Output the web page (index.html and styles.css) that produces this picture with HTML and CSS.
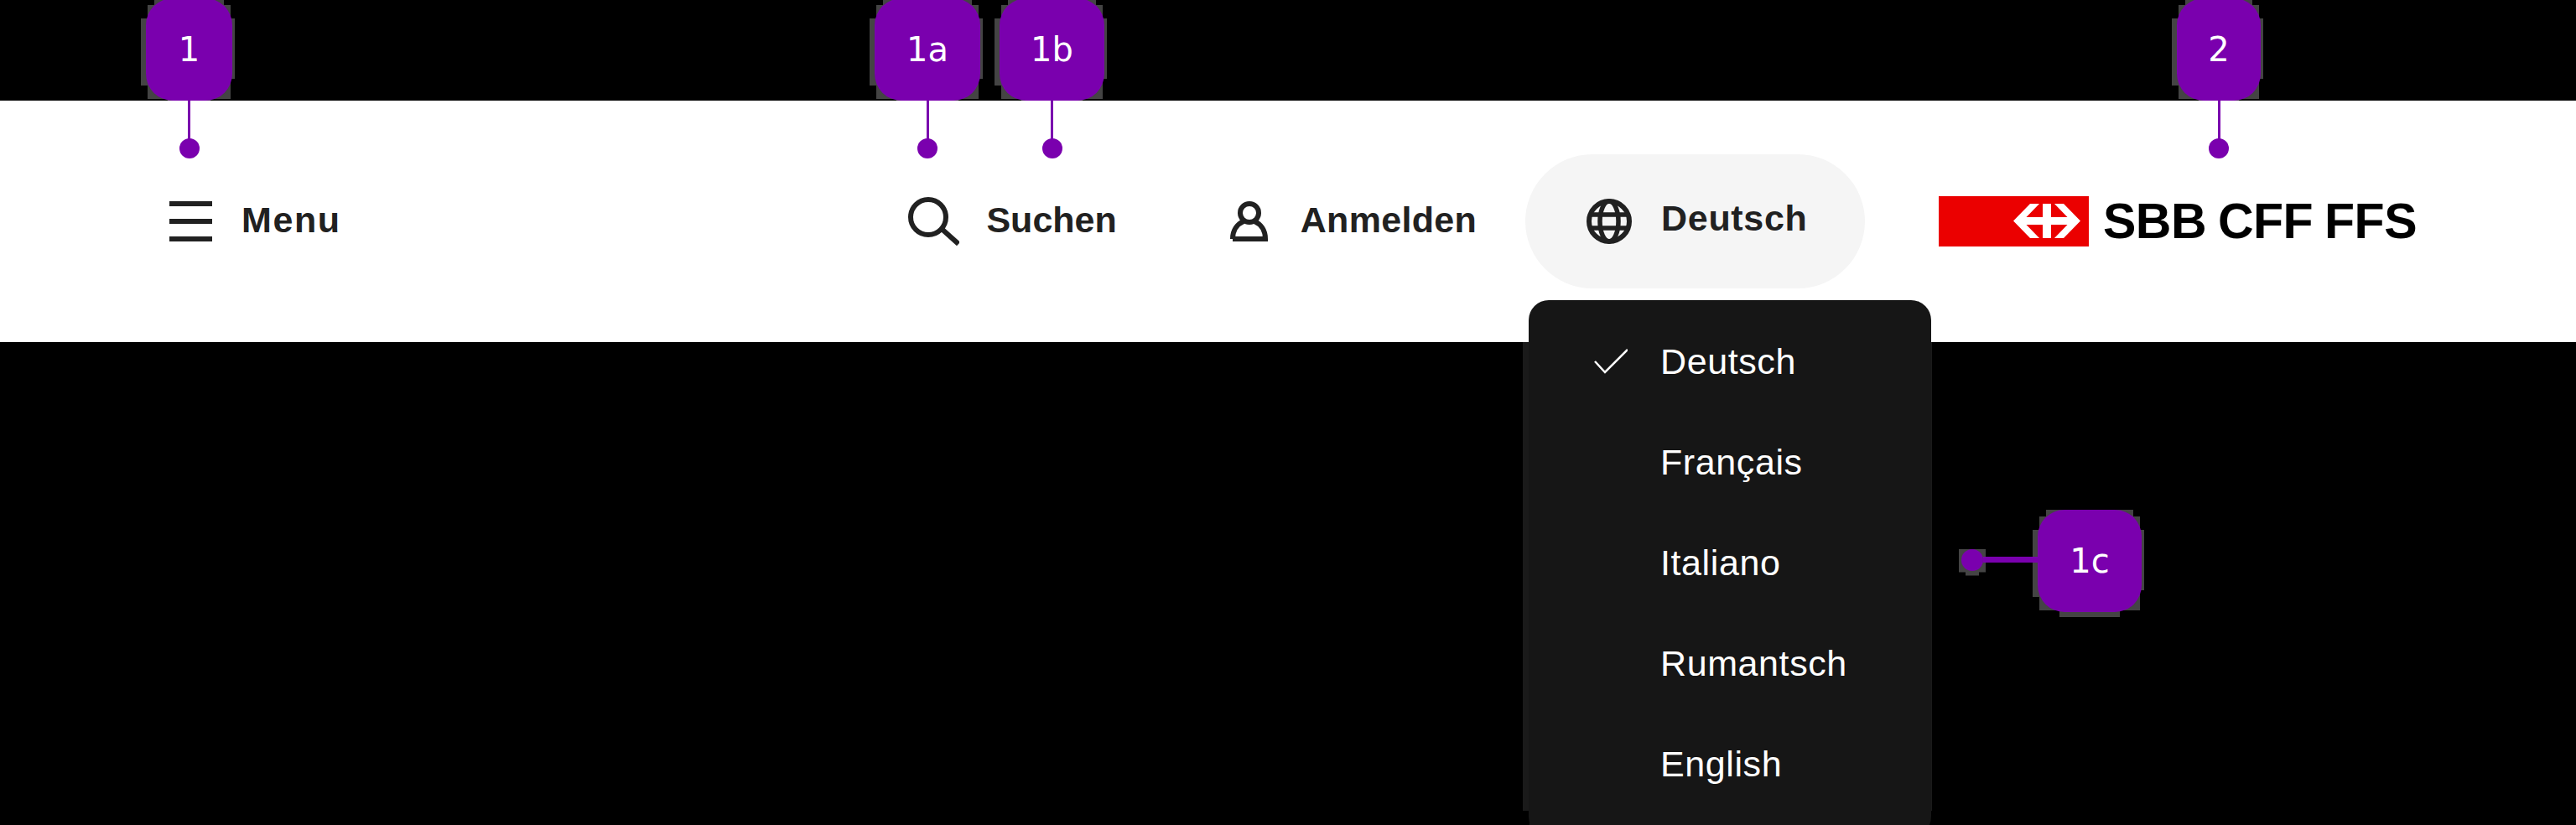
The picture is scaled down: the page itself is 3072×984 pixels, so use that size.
FILE: index.html
```html
<!DOCTYPE html>
<html>
<head>
    <title>Header Anatomy</title>
    <link rel="stylesheet" href="styles.css">
</head>
<body>
    <header class="site-header">
        <a class="nav-item menu-item">
            <svg class="icon" width="51" height="48" viewBox="0 0 51 48">
                <path d="M0 3H51M0 24H51M0 45H51" fill="none" stroke="#212121" stroke-width="6"/>
            </svg>
            <span>Menu</span>
        </a>

        <a class="nav-item search-item">
            <svg class="icon" width="61" height="58" viewBox="0 0 61 58">
                <circle cx="24" cy="24" r="21" fill="none" stroke="#212121" stroke-width="6"/>
                <path d="M40 38L60 56" fill="none" stroke="#212121" stroke-width="6"/>
            </svg>
            <span>Suchen</span>
        </a>

        <a class="nav-item login-item">
            <svg class="icon" width="45" height="48" viewBox="0 0 45 48">
                <circle cx="23" cy="14" r="11" fill="none" stroke="#212121" stroke-width="6"/>
                <path d="M3 45H42C42 34 36 27 29 24M3 45C3 34 9 27 16 24" fill="none" stroke="#212121" stroke-width="6"/>
            </svg>
            <span>Anmelden</span>
        </a>

        <a class="nav-item lang-item">
            <svg class="icon" width="54" height="54" viewBox="0 0 54 54">
                <circle cx="27" cy="27" r="24" fill="none" stroke="#212121" stroke-width="6"/>
                <ellipse cx="27" cy="27" rx="11" ry="24" fill="none" stroke="#212121" stroke-width="5.5"/>
                <path d="M4 19H50M4 35H50" fill="none" stroke="#212121" stroke-width="5.5"/>
            </svg>
            <span>Deutsch</span>
        </a>

        <div class="logo">
            <svg width="179" height="60" viewBox="0 0 179 60">
                <rect width="179" height="60" fill="#eb0000"/>
                <path d="M89 29.5L109 9H120L104.5 25H124V9H134V25H153.5L138 9H149L169 29.5L149 50H138L153.5 34H134V50H124V34H104.5L120 50H109Z" fill="#fff"/>
            </svg>
            <span class="logo-text">SBB CFF FFS</span>
        </div>
    </header>

    <div class="lang-shadow"></div>
    <ul class="lang-menu">
        <li class="lang-option">
            <span class="check-slot">
                <svg width="40" height="30" viewBox="0 0 40 30">
                    <path d="M1 15L13 28L40 1" fill="none" stroke="#fff" stroke-width="2.5"/>
                </svg>
            </span>
            Deutsch
        </li>
        <li class="lang-option"><span class="check-slot"></span>Français</li>
        <li class="lang-option"><span class="check-slot"></span>Italiano</li>
        <li class="lang-option"><span class="check-slot"></span>Rumantsch</li>
        <li class="lang-option"><span class="check-slot"></span>English</li>
    </ul>

    <!-- numbered markers on top of the header -->
    <div class="marker marker-1">
        <span class="marker-badge"><span class="marker-label">1</span></span>
        <span class="marker-line"></span>
        <span class="marker-dot"></span>
    </div>
    <div class="marker marker-1a">
        <span class="marker-badge"><span class="marker-label">1a</span></span>
        <span class="marker-line"></span>
        <span class="marker-dot"></span>
    </div>
    <div class="marker marker-1b">
        <span class="marker-badge"><span class="marker-label">1b</span></span>
        <span class="marker-line"></span>
        <span class="marker-dot"></span>
    </div>
    <div class="marker marker-2">
        <span class="marker-badge"><span class="marker-label">2</span></span>
        <span class="marker-line"></span>
        <span class="marker-dot"></span>
    </div>
    <div class="marker marker-1c">
        <span class="marker-dot"></span>
        <span class="marker-line"></span>
        <span class="marker-badge"><span class="marker-label">1c</span></span>
    </div>
</body>
</html>
```

FILE: styles.css
```css
body {
    font-family: "Liberation Sans", Arial, sans-serif;
    background-color: #000;
    margin: 0;
    padding: 0;
    height: 984px;
    overflow: hidden;
}

.site-header {
    position: relative;
    z-index: 1;
    display: flex;
    align-items: center;
    box-sizing: border-box;
    height: 288px;
    margin-top: 120px;
    padding: 0 190px 0 202px;
    background-color: #fff;
}

.nav-item {
    display: flex;
    align-items: center;
    color: #212121;
    font-size: 43px;
    font-weight: bold;
    letter-spacing: 0.3px;
}

.nav-item span {
    position: relative;
    top: -2px;
}

.icon {
    flex: none;
}

.menu-item {
    gap: 35px;
    letter-spacing: 1.6px;
}

.search-item {
    gap: 32px;
    margin-left: auto;
    letter-spacing: 0;
}

.login-item {
    gap: 39px;
    margin-left: 135px;
}

.lang-item {
    gap: 35px;
    box-sizing: border-box;
    width: 405px;
    height: 160px;
    margin-left: 58px;
    padding-left: 73px;
    background-color: #f5f5f5;
    border-radius: 80px;
    letter-spacing: 0.7px;
}

.lang-item span {
    top: -4px;
}

.logo {
    display: flex;
    align-items: center;
    gap: 17px;
    margin-left: 88px;
}

.logo svg {
    display: block;
}

.logo-text {
    color: #000;
    font-size: 59px;
    font-weight: bold;
    letter-spacing: -0.5px;
    word-spacing: -2px;
    white-space: nowrap;
}

/* dropdown */
.lang-menu {
    position: absolute;
    z-index: 2;
    top: 358px;
    left: 1823px;
    box-sizing: border-box;
    width: 480px;
    height: 640px;
    margin: 0;
    padding: 13px 0 0;
    list-style-type: none;
    background-color: #161616;
    border-radius: 24px;
}

.lang-shadow {
    position: absolute;
    z-index: 0;
    top: 400px;
    left: 1816px;
    width: 488px;
    height: 584px;
    background-color: #1a1a1a;
    clip-path: polygon(0 0, 100% 0, 100% 567px, 480px 567px, 480px 100%, 8px 100%, 8px 567px, 0 567px);
}

.lang-option {
    display: flex;
    align-items: center;
    height: 120px;
    padding-left: 78px;
    color: #fff;
    font-size: 43px;
    letter-spacing: 0.6px;
}

.check-slot {
    display: flex;
    align-items: center;
    flex: none;
    width: 79px;
    height: 30px;
}

/* markers */
.marker {
    position: absolute;
    top: -2px;
    display: flex;
    flex-direction: column;
    align-items: center;
}

.marker-1 { left: 174px; width: 103px; }
.marker-1a { left: 1043px; width: 126px; }
.marker-1b { left: 1192px; width: 125px; }
.marker-2 { left: 2596px; width: 100px; }

.marker-badge {
    position: relative;
    display: flex;
    align-items: center;
    justify-content: center;
    box-sizing: border-box;
    width: 100%;
    height: 122px;
    color: #fff;
    font-family: "DejaVu Sans", sans-serif;
    font-size: 40px;
}

/* stepped grey edge around each badge, kept under the white header */
.marker-badge::before {
    content: "";
    position: absolute;
    z-index: 0;
    top: 0;
    left: -6px;
    width: calc(100% + 9px);
    height: 130px;
    background-color: #444;
    clip-path: polygon(
        16px 0, calc(100% - 13px) 0, calc(100% - 13px) 8px, calc(100% - 5px) 8px,
        calc(100% - 5px) 24px, 100% 24px, 100% 96px, calc(100% - 5px) 96px,
        calc(100% - 5px) 120px, calc(100% - 29px) 120px, calc(100% - 29px) 128px,
        32px 128px, 32px 120px, 8px 120px, 8px 104px, 0 104px, 0 24px, 8px 24px, 8px 8px, 16px 8px
    );
}

.marker-badge::after {
    content: "";
    position: absolute;
    z-index: 2;
    top: 0;
    left: 0;
    width: 100%;
    height: 100%;
    background-color: #7a00ae;
    border-radius: 32px;
}

.marker-label {
    position: relative;
    z-index: 3;
}

.marker-line {
    position: relative;
    z-index: 3;
    width: 3px;
    height: 46px;
    background-color: #7a00ae;
}

.marker-dot {
    position: relative;
    z-index: 3;
    width: 24px;
    height: 24px;
    margin-top: -1px;
    background-color: #7a00ae;
    border-radius: 50%;
}

.marker-1c {
    top: 608px;
    left: 2339px;
    flex-direction: row;
    width: 215px;
}

.marker-1c .marker-badge {
    flex: none;
    width: 124px;
}

.marker-1c .marker-line {
    flex: none;
    width: 65px;
    height: 7px;
    margin-bottom: 3px;
}

.marker-1c .marker-dot {
    z-index: auto;
    flex: none;
    width: 26px;
    height: 26px;
    margin: 0 0 3px;
}

.marker-1c .marker-dot::before {
    content: "";
    position: absolute;
    z-index: -1;
    top: 0;
    left: -3px;
    width: 32px;
    height: 32px;
    background-color: #444;
    clip-path: polygon(0 0, 100% 0, 100% 28px, 24px 28px, 24px 100%, 8px 100%, 8px 28px, 0 28px);
}
```
